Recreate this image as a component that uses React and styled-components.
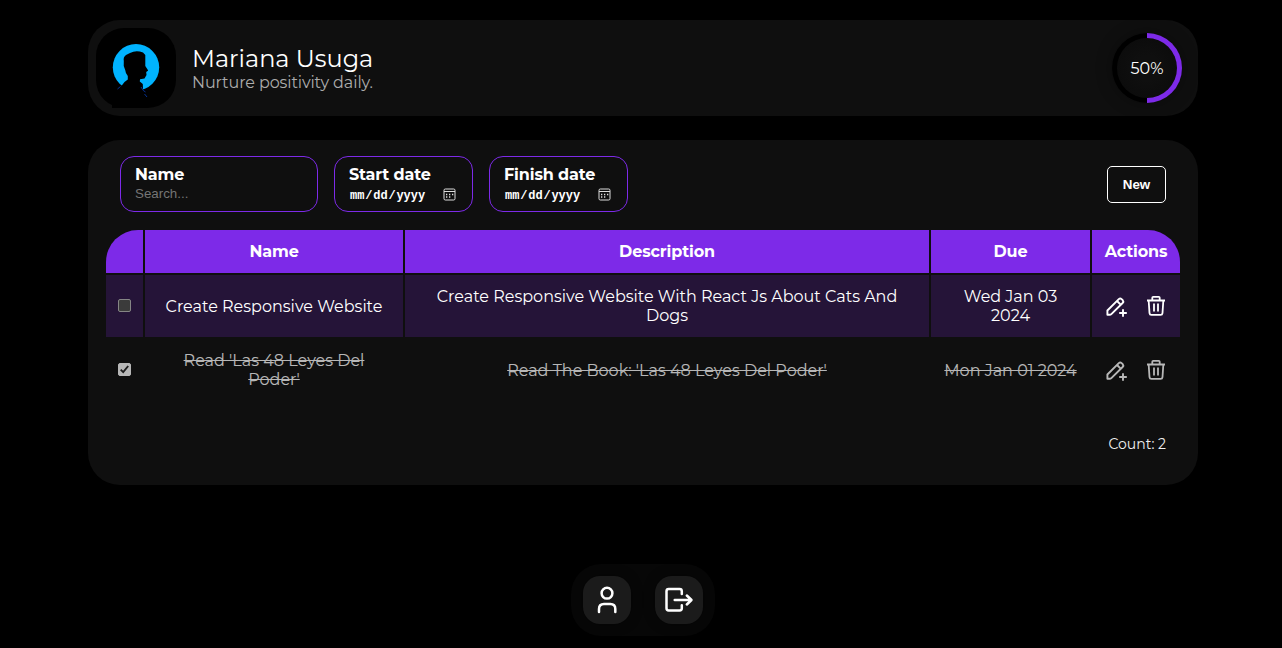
import React from "react";
import styled, { createGlobalStyle, css } from "styled-components";

const accent = "#7d2ae8";

const GlobalStyle = createGlobalStyle`
  * { box-sizing: border-box; }
  html, body { margin: 0; background: #000; }
  body {
    height: 648px;
    overflow: hidden;
    color: #fff;
    font-family: Montserrat, Inter, sans-serif;
    font-size: 16px;
    line-height: 19px;
  }
`;

const Page = styled.div`
  width: 1110px;
  height: 648px;
  margin-left: 88px;
  padding-top: 20px;
  display: flex;
  flex-direction: column;
`;

const Label = styled.span`
  display: block;
  white-space: nowrap;
`;

const Header = styled.header`
  height: 96px;
  flex: none;
  display: flex;
  align-items: center;
  padding: 8px 16px 8px 8px;
  border-radius: 32px;
  background: #0f0f0f;
`;

const Avatar = styled.div`
  width: 80px;
  height: 80px;
  border-radius: 28px;
  background: #000;
  svg { display: block; }
`;

const Identity = styled.div`
  flex: 1;
  padding-left: 16px;
`;

const UserName = styled.h1`
  margin: 0;
  font-size: 24px;
  line-height: 28px;
  font-weight: 400;
`;

const Motto = styled.p`
  margin: 0;
  color: #acacac;
  line-height: 19px;
  letter-spacing: -0.1px;
`;

const Progress = styled.div`
  width: 70px;
  height: 70px;
  border-radius: 50%;
  display: grid;
  place-items: center;
  background: conic-gradient(${accent} 50%, #000 0);
  box-shadow: 0 0 16px rgba(0, 0, 0, 0.35);
`;

const ProgressInner = styled.div`
  width: 60px;
  height: 60px;
  border-radius: 50%;
  display: grid;
  place-items: center;
  background: radial-gradient(#0f0f0f 30%, #0a0a0a 100%);
`;

const Panel = styled.main`
  margin-top: 24px;
  height: 345px;
  flex: none;
  border-radius: 32px;
  background: #0f0f0f;
  padding: 16px 18px 0;
`;

const Toolbar = styled.div`
  display: flex;
  align-items: center;
  gap: 16px;
  height: 56px;
  padding: 0 14px;
`;

const Field = styled.label`
  width: ${(p) => p.$width}px;
  height: 56px;
  border: 1px solid ${accent};
  border-radius: 14px;
  padding: 8px 14px;
  display: flex;
  flex-direction: column;
`;

const FieldTitle = styled.span`
  font-weight: 700;
  height: 19px;
  letter-spacing: -0.13px;
`;

const Search = styled.input`
  width: 100%;
  height: 18px;
  border: 0;
  padding: 0;
  outline: 0;
  background: transparent;
  color: #fff;
  font: 13.33px "Liberation Sans", sans-serif;
  &::placeholder { color: #757575; opacity: 1; }
`;

const DateValue = styled.span`
  display: flex;
  align-items: center;
  justify-content: space-between;
  height: 21px;
  padding: 1px 2px 0 1px;
  font: 700 12px "Liberation Mono", monospace;
`;

const DateParts = styled.span`
  display: flex;
  gap: 0.8px;
  padding-top: 3px;
`;

const Spacer = styled.div`
  flex: 1;
`;

const NewButton = styled.button`
  width: 59px;
  height: 37px;
  padding: 0;
  border: 1px solid #fff;
  border-radius: 5px;
  background: transparent;
  color: #fff;
  font: 700 13.33px "Liberation Sans", sans-serif;
`;

const Table = styled.div`
  margin-top: 18px;
  display: flex;
  flex-direction: column;
  gap: 2px;
  border-radius: 32px 32px 0 0;
  overflow: hidden;
`;

const Row = styled.div`
  display: grid;
  grid-template-columns: 37px 258px 524px 159px 88px;
  gap: 2px;
  height: ${(p) => (p.$head ? 43 : 62)}px;
`;

const Cell = styled.div`
  display: flex;
  flex-direction: column;
  align-items: center;
  justify-content: center;
  text-align: center;
  background: ${(p) => (p.$head ? accent : p.$done ? "transparent" : "#251438")};
  font-weight: ${(p) => (p.$head ? 700 : 400)};
  letter-spacing: ${(p) => (p.$head ? "-0.13px" : "normal")};
  ${(p) => p.$done && css`
    ${Label} { text-decoration: line-through; }
  `}
`;

const Actions = styled(Cell)`
  flex-direction: row;
  gap: 16px;
  svg { display: block; }
`;

const Check = styled.span`
  width: 13px;
  height: 13px;
  margin-bottom: 1px;
  border-radius: 2px;
  border: 1px solid ${(p) => (p.$on ? "#fff" : "#858585")};
  background: ${(p) => (p.$on ? "#fff" : "#3b3b3b")};
  svg { display: block; }
`;

const DoneRow = styled(Row)`
  opacity: 0.7;
`;

const Count = styled.div`
  margin: 35px 14px 0 0;
  text-align: right;
  font-size: 14px;
  line-height: 17px;
  color: #f0f0f0;
`;

const Dock = styled.nav`
  align-self: center;
  margin-top: 79px;
  width: 144px;
  height: 72px;
  flex: none;
  display: flex;
  gap: 24px;
  padding: 12px;
  border-radius: 30px;
  background: #070707;
`;

const DockButton = styled.button`
  width: 48px;
  height: 48px;
  padding: 0;
  border: 0;
  border-radius: 17px;
  background: #1b1b1b;
  box-shadow: 0 0 12px rgba(0, 0, 0, 0.4);
  svg { display: block; }
`;

const AvatarArt = () => (
  <svg width="80" height="80" viewBox="0 0 80 80">
    <circle cx="40" cy="39.3" r="23.2" fill="#00b3ff" />
    <path d="M16 80V63L25 58.5L28.5 54L31.8 51.5V48Q29.5 45.5 29.2 42Q27 38 27.8 33Q27 29 30 27L34 25Q40 22 47 24.5L49.3 27V38L52.2 42.5L50.2 44L50.5 47L48.5 50.5L44 51.2L43.8 53.5L46.8 56L47 61.5L49 64V80Z" fill="#000" />
    <path d="M24.5 58.5L21.5 61M45 59L47.3 62.5L49.5 64M48.5 66L51 69" stroke="#063cb8" strokeWidth="0.8" fill="none" />
  </svg>
);

const CalendarIcon = () => (
  <svg width="13" height="13" viewBox="0 0 13 13" fill="none" stroke="#ddd">
    <rect x="1" y="1" width="11" height="11" rx="1.3" />
    <path d="M1 3.5H12" />
    <path d="M3 6.5H4.3M6 6.5H7.3M9 6.5H10.3M3 9H4.3M6 9H7.3" strokeWidth="1.3" />
  </svg>
);

const EditIcon = () => (
  <svg width="24" height="24" viewBox="0 0 24 24" fill="none" stroke="#fff" strokeWidth="1.9" strokeLinejoin="round">
    <path d="M3.4 20.8V16.5L14.8 5.1Q16.2 3.8 17.6 5.1L18.7 6.2Q19.9 7.6 18.6 9L7.6 19.9Q6.7 20.8 5.5 20.8Z" />
    <path d="M13 7L16.7 10.7" />
    <path d="M19 15.2V22.8M15.2 19H22.8" />
  </svg>
);

const TrashIcon = () => (
  <svg width="24" height="24" viewBox="0 0 24 24" fill="none" stroke="#fff" strokeWidth="1.8">
    <path d="M3 6.5H21M8.3 6V3.7Q8.3 2.9 9.2 2.9H14.8Q15.7 2.9 15.7 3.7V6" />
    <path d="M4.7 7L5.5 19.1Q5.7 20.9 7.4 20.9H16.6Q18.3 20.9 18.5 19.1L19.3 7M10 9.5V17.5M14 9.5V17.5" />
  </svg>
);

const CheckMark = () => (
  <svg width="11" height="11" viewBox="0 0 11 11" fill="none" stroke="#242424" strokeWidth="1.9">
    <path d="M1.7 5.7L4.2 8.2L9.2 2" />
  </svg>
);

const UserIcon = () => (
  <svg width="48" height="48" viewBox="0 0 48 48" fill="none" stroke="#fff" strokeWidth="2.5" strokeLinecap="round">
    <circle cx="24" cy="17.2" r="5.4" />
    <path d="M16 36V33Q16 28 21 28H27.3Q32.3 28 32.3 33V36" />
  </svg>
);

const LogoutIcon = () => (
  <svg width="48" height="48" viewBox="0 0 48 48" fill="none" stroke="#fff" strokeWidth="2.5" strokeLinecap="round" strokeLinejoin="round">
    <path d="M26.8 18V15.2Q26.8 13 24.6 13H13.7Q11.5 13 11.5 15.2V32.3Q11.5 34.5 13.7 34.5H24.6Q26.8 34.5 26.8 32.3V29.2" />
    <path d="M19.7 24H36.3M31.8 19.5L36.5 24L31.8 28.5" />
  </svg>
);

const DateField = ({ title }) => (
  <Field $width={139}>
    <FieldTitle><Label>{title}</Label></FieldTitle>
    <DateValue>
      <DateParts><span>mm</span><span>/</span><span>dd</span><span>/</span><span>yyyy</span></DateParts>
      <CalendarIcon />
    </DateValue>
  </Field>
);

const columns = ["Name", "Description", "Due", "Actions"];

export default function App() {
  return (
    <>
      <GlobalStyle />
      <Page>
        <Header>
          <Avatar><AvatarArt /></Avatar>
          <Identity>
            <UserName>Mariana Usuga</UserName>
            <Motto>Nurture positivity daily.</Motto>
          </Identity>
          <Progress><ProgressInner><Label>50%</Label></ProgressInner></Progress>
        </Header>
        <Panel>
          <Toolbar>
            <Field $width={198}>
              <FieldTitle><Label>Name</Label></FieldTitle>
              <Search placeholder="Search..." />
            </Field>
            <DateField title="Start date" />
            <DateField title="Finish date" />
            <Spacer />
            <NewButton>New</NewButton>
          </Toolbar>
          <Table>
            <Row $head>
              <Cell $head />
              {columns.map((name) => (
                <Cell $head key={name}><Label>{name}</Label></Cell>
              ))}
            </Row>
            <Row>
              <Cell><Check /></Cell>
              <Cell><Label>Create Responsive Website</Label></Cell>
              <Cell>
                <Label>Create Responsive Website With React Js About Cats And</Label>
                <Label>Dogs</Label>
              </Cell>
              <Cell><Label>Wed Jan 03</Label><Label>2024</Label></Cell>
              <Actions><EditIcon /><TrashIcon /></Actions>
            </Row>
            <DoneRow>
              <Cell $done><Check $on><CheckMark /></Check></Cell>
              <Cell $done><Label>Read 'Las 48 Leyes Del</Label><Label>Poder'</Label></Cell>
              <Cell $done><Label>Read The Book: 'Las 48 Leyes Del Poder'</Label></Cell>
              <Cell $done><Label>Mon Jan 01 2024</Label></Cell>
              <Actions $done><EditIcon /><TrashIcon /></Actions>
            </DoneRow>
          </Table>
          <Count>Count: 2</Count>
        </Panel>
        <Dock>
          <DockButton aria-label="Profile"><UserIcon /></DockButton>
          <DockButton aria-label="Log out"><LogoutIcon /></DockButton>
        </Dock>
      </Page>
    </>
  );
}
